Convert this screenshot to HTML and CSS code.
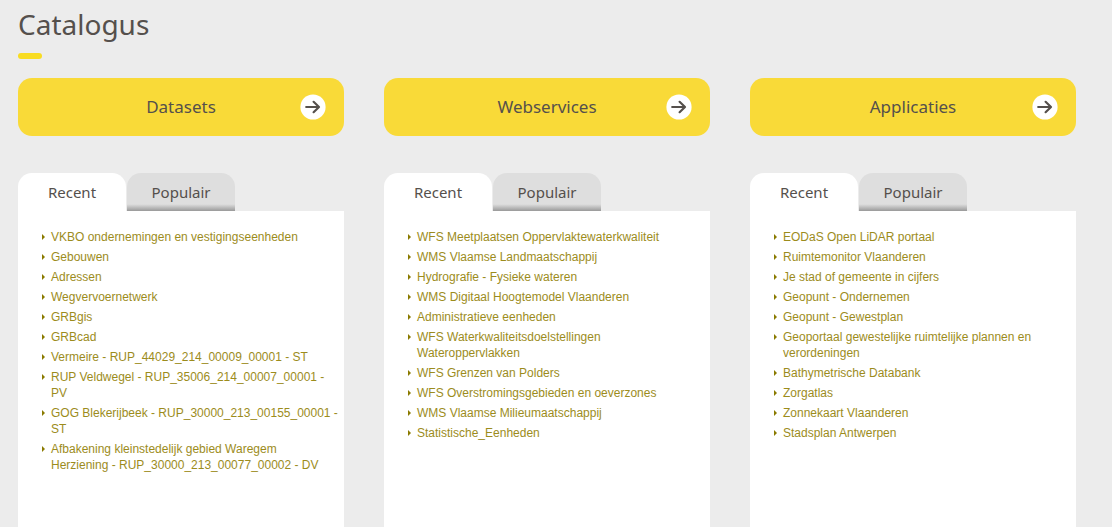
FILE: index.html
```html
<!DOCTYPE html>
<html lang="nl">
<head>
<meta charset="utf-8">
<title>Catalogus</title>
<link rel="stylesheet" href="styles.css">
</head>
<body>
<main class="catalog">
  <h1 class="title">Catalogus</h1>
  <div class="columns">
    <section class="column">
      <a class="banner" href="#"><span class="banner-label">Datasets</span><svg class="arrow" viewBox="0 0 26 26"><circle cx="13" cy="13" r="12.600" fill="#fff"/><path d="M6.200 13H18.500M13.600 7.800L19 13l-5.400 5.200" fill="none" stroke="#55504c" stroke-width="2.200" stroke-linecap="round" stroke-linejoin="round"/></svg></a>
      <div class="tabs"><button class="tab active" type="button">Recent</button><button class="tab" type="button">Populair</button></div>
      <div class="panel"><ul class="list">
        <li><a href="#">VKBO ondernemingen en vestigingseenheden</a></li>
        <li><a href="#">Gebouwen</a></li>
        <li><a href="#">Adressen</a></li>
        <li><a href="#">Wegvervoernetwerk</a></li>
        <li><a href="#">GRBgis</a></li>
        <li><a href="#">GRBcad</a></li>
        <li><a href="#">Vermeire - RUP_44029_214_00009_00001 - ST</a></li>
        <li><a href="#">RUP Veldwegel - RUP_35006_214_00007_00001 -<br>PV</a></li>
        <li><a href="#">GOG Blekerijbeek - RUP_30000_213_00155_00001 -<br>ST</a></li>
        <li><a href="#">Afbakening kleinstedelijk gebied Waregem<br>Herziening - RUP_30000_213_00077_00002 - DV</a></li>
      </ul></div>
    </section>
    <section class="column">
      <a class="banner" href="#"><span class="banner-label">Webservices</span><svg class="arrow" viewBox="0 0 26 26"><circle cx="13" cy="13" r="12.600" fill="#fff"/><path d="M6.200 13H18.500M13.600 7.800L19 13l-5.400 5.200" fill="none" stroke="#55504c" stroke-width="2.200" stroke-linecap="round" stroke-linejoin="round"/></svg></a>
      <div class="tabs"><button class="tab active" type="button">Recent</button><button class="tab" type="button">Populair</button></div>
      <div class="panel"><ul class="list">
        <li><a href="#">WFS Meetplaatsen Oppervlaktewaterkwaliteit</a></li>
        <li><a href="#">WMS Vlaamse Landmaatschappij</a></li>
        <li><a href="#">Hydrografie - Fysieke wateren</a></li>
        <li><a href="#">WMS Digitaal Hoogtemodel Vlaanderen</a></li>
        <li><a href="#">Administratieve eenheden</a></li>
        <li><a href="#">WFS Waterkwaliteitsdoelstellingen<br>Wateroppervlakken</a></li>
        <li><a href="#">WFS Grenzen van Polders</a></li>
        <li><a href="#">WFS Overstromingsgebieden en oeverzones</a></li>
        <li><a href="#">WMS Vlaamse Milieumaatschappij</a></li>
        <li><a href="#">Statistische_Eenheden</a></li>
      </ul></div>
    </section>
    <section class="column">
      <a class="banner" href="#"><span class="banner-label">Applicaties</span><svg class="arrow" viewBox="0 0 26 26"><circle cx="13" cy="13" r="12.600" fill="#fff"/><path d="M6.200 13H18.500M13.600 7.800L19 13l-5.400 5.200" fill="none" stroke="#55504c" stroke-width="2.200" stroke-linecap="round" stroke-linejoin="round"/></svg></a>
      <div class="tabs"><button class="tab active" type="button">Recent</button><button class="tab" type="button">Populair</button></div>
      <div class="panel"><ul class="list">
        <li><a href="#">EODaS Open LiDAR portaal</a></li>
        <li><a href="#">Ruimtemonitor Vlaanderen</a></li>
        <li><a href="#">Je stad of gemeente in cijfers</a></li>
        <li><a href="#">Geopunt - Ondernemen</a></li>
        <li><a href="#">Geopunt - Gewestplan</a></li>
        <li><a href="#">Geoportaal gewestelijke ruimtelijke plannen en verordeningen</a></li>
        <li><a href="#">Bathymetrische Databank</a></li>
        <li><a href="#">Zorgatlas</a></li>
        <li><a href="#">Zonnekaart Vlaanderen</a></li>
        <li><a href="#">Stadsplan Antwerpen</a></li>
      </ul></div>
    </section>
  </div>
</main>
</body>
</html>
```

FILE: styles.css
```css
*, *::before, *::after { box-sizing: border-box; }
html, body { height: 100%; }
body { margin: 0; background: #ececec; color: #55504c; font-family: "Liberation Sans", Arial, sans-serif; }
.catalog { min-height: 100%; padding: 4px 36px 0 18px; display: flex; flex-direction: column; }
.title { margin: 0; font: 400 28px/40px "Noto Sans", sans-serif; }
.title::after { content: ""; display: block; width: 24px; height: 6px; margin: 9px 0 19px; border-radius: 3px; background: #f8dc22; }
.columns { flex: 1; display: grid; grid-template-columns: repeat(3, minmax(0, 1fr)); gap: 40px; }
.column { display: flex; flex-direction: column; }
.banner { display: flex; align-items: center; height: 58px; padding: 0 18px; border-radius: 14px; background: #f9da38; color: #55504c; text-decoration: none; font: 400 17px/24px "Noto Sans", sans-serif; }
.banner-label { flex: 1; padding-left: 26px; text-align: center; }
.arrow { width: 26px; height: 26px; }
.tabs { display: flex; gap: 1px; margin-top: 37px; }
.tab { width: 108px; height: 38px; padding: 0; border: 0; border-radius: 14px 14px 0 0; background: linear-gradient(#dedede 82%, #999); color: #55504c; font: 400 15px/22px "Noto Sans", sans-serif; }
.tab.active { background: #fff; }
.panel { flex: 1; padding: 18px 4px 18px 24px; background: #fff; }
.list { margin: 0; padding: 0; list-style: none; font-size: 12px; line-height: 16px; }
.list li { display: flex; gap: 6px; margin-bottom: 4px; }
.list li::before { content: ""; flex: none; margin-top: 5px; height: 6px; border: 3px solid transparent; border-left-color: #8a7a00; border-right: 0; }
.list a { color: #9c8c1c; text-decoration: none; }
```
